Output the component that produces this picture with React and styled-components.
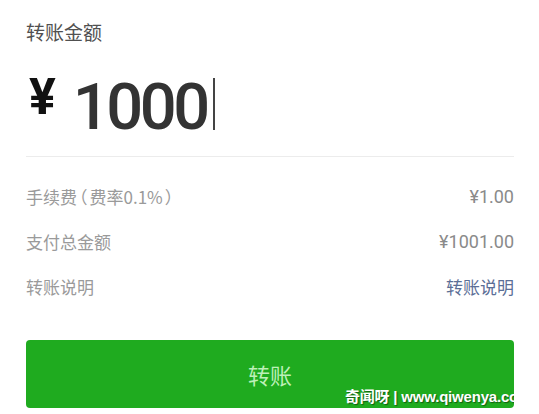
import React from "react";
import styled, { createGlobalStyle } from "styled-components";

const GlobalStyle = createGlobalStyle`
  html, body {
    margin: 0;
    padding: 0;
    background: #ffffff;
  }
  body {
    font-family: "Noto Sans CJK SC", "Noto Sans", sans-serif;
  }
`;

const Page = styled.div`
  width: 539px;
  height: 414px;
  box-sizing: border-box;
  padding: 19px 25px 0 26px;
  overflow: hidden;
  display: flex;
  flex-direction: column;
`;

const Title = styled.div`
  font-size: 19px;
  line-height: 26px;
  color: #505050;
  font-family: "Noto Sans CJK SC", sans-serif;
`;

const AmountRow = styled.div`
  margin-top: 29px;
  display: flex;
  align-items: flex-start;
  height: 66px;
`;

const Currency = styled.span`
  font-family: Roboto, "Liberation Sans", sans-serif;
  font-weight: 700;
  font-size: 50px;
  line-height: 50px;
  color: #111111;
  margin-top: -2px;
  margin-left: 3px;
  margin-right: 17px;
`;

const AmountValue = styled.span`
  font-family: Roboto, "Liberation Sans", sans-serif;
  font-weight: 500;
  font-size: 65px;
  line-height: 66px;
  letter-spacing: -3.5px;
  color: #333333;
`;

const Caret = styled.span`
  display: inline-block;
  width: 2px;
  height: 52px;
  background: #444444;
  margin-left: 6px;
  margin-top: 4px;
`;

const Divider = styled.div`
  margin-top: 16px;
  height: 1px;
  background: #ececec;
`;

const InfoList = styled.div`
  margin-top: 17px;
  display: flex;
  flex-direction: column;
`;

const InfoRow = styled.div`
  height: 45px;
  display: flex;
  align-items: center;
  justify-content: space-between;
`;

const InfoLabel = styled.span`
  font-family: "Noto Sans CJK SC", sans-serif;
  font-size: 17px;
  color: #9a9a9a;
  font-feature-settings: "halt";
`;

const Paren = styled.span`
  margin: 0 2px;
`;

const InfoValue = styled.span`
  font-family: ${(p) => (p.$link ? `"Noto Sans CJK SC", sans-serif` : `Roboto, "Noto Sans CJK SC", sans-serif`)};
  font-size: ${(p) => (p.$link ? "17px" : "18px")};
  color: ${(p) => (p.$link ? "#5b6e96" : "#8a8a8a")};
`;

const Button = styled.button`
  margin-top: 31px;
  height: 68px;
  width: 100%;
  border: none;
  border-radius: 4px;
  background: #1fab1f;
  color: #bdf0b8;
  font-family: "Noto Sans CJK SC", sans-serif;
  font-size: 22px;
  position: relative;
  overflow: hidden;
  padding: 0;
  display: flex;
  align-items: center;
  justify-content: center;
`;

const Watermark = styled.span`
  position: absolute;
  left: 319px;
  bottom: 1px;
  white-space: nowrap;
  font-family: "Liberation Sans", "Noto Sans CJK SC", sans-serif;
  font-weight: 700;
  font-size: 15px;
  line-height: 20px;
  letter-spacing: -0.2px;
  color: #ffffff;
  text-shadow: 1px 1px 1px rgba(0, 0, 0, 0.45);
`;

export default function App() {
  return (
    <>
      <GlobalStyle />
      <Page>
        <Title>转账金额</Title>
        <AmountRow>
          <Currency>¥</Currency>
          <AmountValue>1000</AmountValue>
          <Caret />
        </AmountRow>
        <Divider />
        <InfoList>
          <InfoRow>
            <InfoLabel>
              手续费<Paren>（</Paren>费率0.1%<Paren>）</Paren>
            </InfoLabel>
            <InfoValue>¥1.00</InfoValue>
          </InfoRow>
          <InfoRow>
            <InfoLabel>支付总金额</InfoLabel>
            <InfoValue>¥1001.00</InfoValue>
          </InfoRow>
          <InfoRow>
            <InfoLabel>转账说明</InfoLabel>
            <InfoValue $link>转账说明</InfoValue>
          </InfoRow>
        </InfoList>
        <Button>
          转账
          <Watermark>奇闻呀 | www.qiwenya.com</Watermark>
        </Button>
      </Page>
    </>
  );
}
